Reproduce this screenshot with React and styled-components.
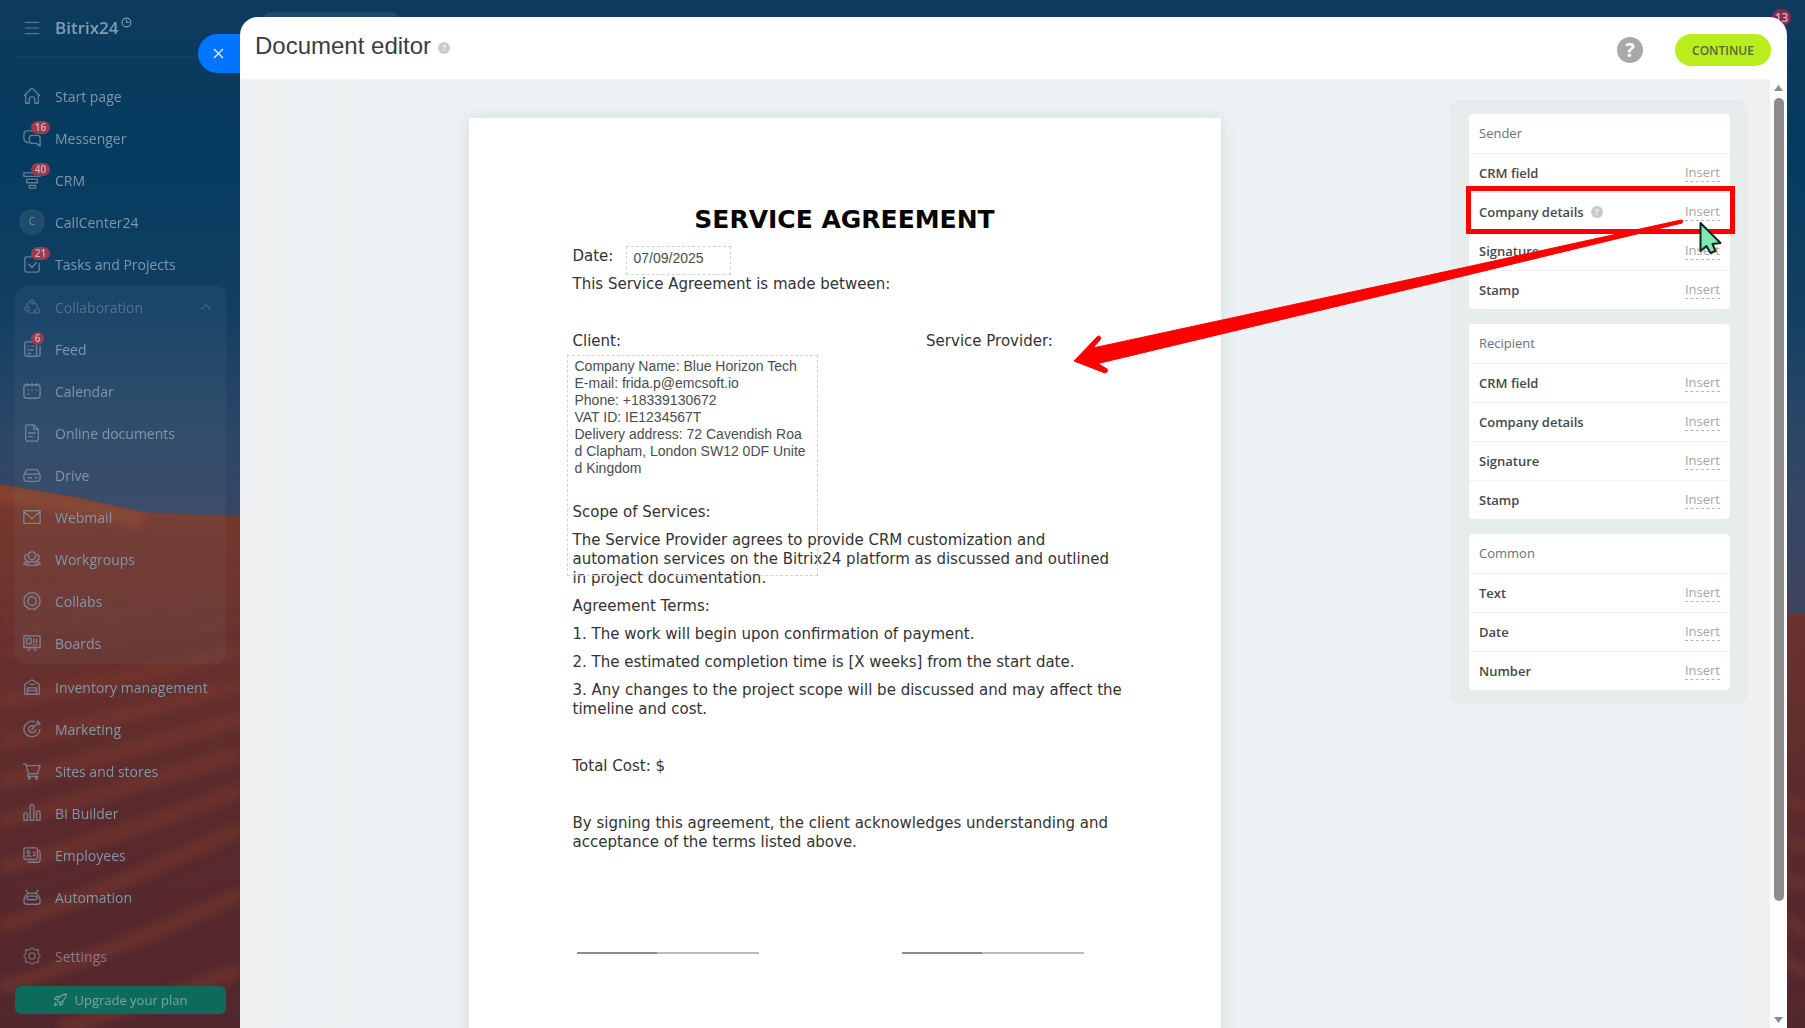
import React from "react";
import styled, { createGlobalStyle } from "styled-components";


const GlobalStyle = createGlobalStyle`
    * { box-sizing: border-box; }
    html, body, #root { height: 100%; }
    body {
        margin: 0;
        overflow: hidden;
        font-family: "Open Sans", "Noto Sans", sans-serif;
    }
    button {
        border: none;
        padding: 0;
        background: none;
        font-family: inherit;
        cursor: pointer;
    }
    h1, h2, p, ul { margin: 0; padding: 0; }
    ul { list-style: none; }
`
const Shell = styled.div`
    position: relative;
    isolation: isolate;
    display: flex;
    height: 100vh;
    overflow: hidden;
    background: #0b3c5f;
`
const Wallpaper = styled.svg`
    position: absolute;
    inset: 0;
    z-index: -1;
    width: 100%;
    height: 100%;
`
const Sidebar = styled.nav`
    flex: none;
    width: 240px;
    display: flex;
    flex-direction: column;
    padding: 0 14px 0 15px;
`
const Brand = styled.div`
    display: flex;
    align-items: center;
    gap: 15px;
    height: 57px;
    margin-bottom: 18px;
    padding-left: 9px;
    border-bottom: 1px solid rgba(255, 255, 255, 0.03);
    color: #839db6;
    font-size: 17px;
    font-weight: 600;
`
const BrandName = styled.span`
    display: flex;
    align-items: flex-start;
    gap: 2px;
    line-height: 22px;
`
const MenuButton = styled.button`
    display: flex;
    color: #587b98;
`
const Group = styled.ul`
    margin: ${({ $boxed }) => ($boxed ? "1px 0 2px" : "0")};
    border-radius: 10px;
    background: ${({ $boxed }) => ($boxed ? "rgba(140, 170, 190, 0.07)" : "none")};
`
const MenuItem = styled.a`
    position: relative;
    display: flex;
    align-items: center;
    gap: 14px;
    height: 42px;
    padding: 0 12px 0 8px;
    color: ${({ $dim }) => ($dim ? "#54728b" : "#8196ac")};
    font-size: 14px;
    font-weight: ${({ $dim }) => ($dim ? 400 : 500)};
    text-decoration: none;
    svg { flex: none; opacity: 0.75; }
    svg:last-child { margin-left: auto; }
`
const Counter = styled.span`
    position: absolute;
    left: 16px;
    top: 4px;
    min-width: ${({ $wide }) => ($wide ? "19px" : "13px")};
    border-radius: 7px;
    background: #9d3a50;
    color: #c4b6c6;
    font-size: 10px;
    font-weight: 600;
    line-height: 13px;
    text-align: center;
`
const Avatar = styled.span`
    width: 26px;
    height: 26px;
    margin: 0 -4px;
    border-radius: 50%;
    background: #214d6d;
    color: #6d8ea9;
    font-size: 10px;
    line-height: 25px;
    text-align: center;
`
const SettingsItem = styled(MenuItem)`
    margin-top: 17px;
    color: #857a8b;
`
const UpgradeButton = styled.button`
    display: flex;
    align-items: center;
    justify-content: center;
    gap: 7px;
    height: 28px;
    margin-top: 9px;
    border-radius: 6px;
    background: #0c6b5b;
    color: #7fa3a2;
    font-size: 13px;
    font-weight: 400;
`
const SearchStub = styled.div`
    position: absolute;
    left: 263px;
    top: 12px;
    z-index: -1;
    width: 136px;
    height: 30px;
    border-radius: 8px;
    background: #214c69;
`
const BellCounter = styled(Counter)`
    left: auto;
    right: 14px;
    top: 9px;
    z-index: -1;
    border-radius: 9px;
    font-size: 12px;
    line-height: 17px;
    background: #8c2a4c;
`
const Slider = styled.main`
    position: relative;
    flex: 1;
    min-width: 0;
    display: flex;
    flex-direction: column;
    margin: 17px 18px 0 0;
    border-radius: 18px 18px 0 0;
    background: #fff;
`
const CloseButton = styled.button`
    position: absolute;
    right: 100%;
    top: 17px;
    display: flex;
    align-items: center;
    justify-content: center;
    width: 42px;
    height: 39px;
    padding-right: 2px;
    border-radius: 20px 0 0 20px;
    background: #0075ff;
    color: #e8f2ff;
`
const Header = styled.header`
    flex: none;
    display: flex;
    align-items: center;
    height: 62px;
    padding: 0 16px 0 15px;
`
const Title = styled.h1`
    margin-bottom: 4px;
    color: #3a3d41;
    font-family: "Liberation Sans", sans-serif;
    font-size: 24px;
    font-weight: 400;
    line-height: 30px;
`
const Hint = styled.span`
    flex: none;
    width: 12px;
    height: 12px;
    margin-left: 7px;
    border-radius: 50%;
    background: #cacaca;
    color: #f4f4f4;
    font-size: 8px;
    font-weight: 700;
    line-height: 12px;
    text-align: center;
`
const HelpButton = styled.button`
    width: 26px;
    height: 26px;
    margin: 4px 32px 0 auto;
    border-radius: 50%;
    background: #aaa8a9;
    color: #fff;
    font-size: 20px;
    font-weight: 700;
    line-height: 26px;
`
const ContinueButton = styled.button`
    width: 96px;
    height: 32px;
    margin-top: 4px;
    border-radius: 16px;
    background: #b9ed1e;
    color: #55683c;
    font-size: 12px;
    font-weight: 600;
`
const Body = styled.div`
    flex: 1;
    min-height: 0;
    display: flex;
`
const Canvas = styled.section`
    flex: 1;
    min-width: 0;
    display: flex;
    justify-content: center;
    align-items: flex-start;
    padding-top: 39px;
    overflow: hidden;
    background: linear-gradient(90deg, #eeeff1, #ecf2f3 12%);
`
const Paper = styled.article`
    position: relative;
    flex: none;
    width: 752px;
    min-height: 1064px;
    padding: 87px 104px;
    background: #fff;
    box-shadow: 0 0 14px rgba(60, 70, 80, 0.12);
    color: #333;
    font-family: "DejaVu Sans", sans-serif;
    font-size: 15px;
    line-height: 19px;
    p { margin: 0 -10px 9px 0; }
`
const PaperTitle = styled.h2`
    margin-bottom: 12px;
    color: #050505;
    font-size: 25px;
    line-height: 30px;
    text-align: center;
`
const Blank = styled.div`
    height: ${({ $big }) => ($big ? "143px" : "29px")};
`
const Parties = styled.div`
    display: flex;
    p { flex: 0 0 65%; margin-right: 0; }
`
const Field = styled.div`
    position: absolute;
    border: 1px dashed #d0d3d6;
    color: #4a4d52;
    font-family: "Liberation Sans", sans-serif;
    font-size: 14px;
    line-height: 17px;
`
const DateField = styled(Field)`
    left: 157px;
    top: 128px;
    width: 105px;
    height: 29px;
    padding: 3px 7px;
`
const CompanyField = styled(Field)`
    left: 98px;
    top: 237px;
    width: 251px;
    height: 221px;
    padding: 2px 9px 2px 7px;
    word-break: break-all;
`
const Signatures = styled.div`
    display: flex;
    gap: 143px;
    padding: 91px 4px 0;
`
const SignLine = styled.span`
    width: 182px;
    height: 2px;
    background: linear-gradient(90deg, #8c8c8c 44%, #bdbdbd 44%);
`
const Tools = styled.aside`
    flex: none;
    padding: 21px 22px 0 0;
    background: linear-gradient(90deg, #ecf2f3 88%, #f0f0f2 94%);
`
const Palette = styled.div`
    display: flex;
    flex-direction: column;
    gap: 15px;
    padding: 14px 18px 14px 20px;
    border-radius: 10px;
    background: #e7ecec;
`
const Card = styled.section`
    width: 261px;
    border-radius: 4px;
    background: #fff;
`
const CardTitle = styled.h2`
    height: 39px;
    padding: 0 10px;
    color: #6b7177;
    font-size: 13px;
    font-weight: 500;
    line-height: 39px;
`
const BlockRow = styled.div`
    display: flex;
    align-items: center;
    height: 39px;
    padding: 0 10px;
    border-top: 1px solid #eef0f2;
    color: #45494e;
    font-size: 13px;
    font-weight: 600;
`
const InsertButton = styled.button`
    margin-left: auto;
    border-bottom: 1px dashed #b5b7ba;
    color: #a4a6aa;
    font-size: 13px;
    line-height: 17px;
`
const Scrollbar = styled.div`
    flex: none;
    display: flex;
    flex-direction: column;
    align-items: center;
    width: 17px;
    padding: 6px 0 5px;
    background: #fdfdfd;
`
const Thumb = styled.div`
    flex: 0 1 803px;
    width: 10px;
    margin: 7px 0 auto;
    border-radius: 5px;
    background: #8c8c8c;
`
const Callout = styled.svg`
    position: absolute;
    right: 0;
    top: 0;
    z-index: 2;
    pointer-events: none;
`

const icons = {
    menu: <path d="M1 3h18M1 10h18M1 17h18" />,
    home: <path d="M1 10 10 1l9 9M3 8v10h4v-5q0-2 3-2t3 2v5h4V8" />,
    chat: <path d="M6 15H5Q1 14 1 10V6q0-4 4-4h9q2 0 2 3M10 7h6q3 0 3 3v9l-4-3h-5q-3 0-3-3v-3q0-3 3-3" />,
    funnel: <path d="M1 2h18v4H1zM4 9h12v4H4zM7 16h7v3H7z" />,
    task: <path d="M12 2H4Q2 2 2 4v13q0 2 2 2h12q2 0 2-2V9M6 10l4 4 5-6" />,
    collab: <path d="M8 4Q4 5 4 10m1 4q4 5 9 2m2-4q1-5-4-7M8 4q0-2 2-2t2 3-2 1-2-2M4 10q-2 0-2 2t3 2 1-3-2-1M16 12q3 0 2 3t-4 1 0-3 2-1" />,
    feed: <path d="M15 18H4q-2 0-2-2V4q0-2 2-2h9q2 0 2 2v12q0 2 2 2t2-2V7M5 7h2m2 0h3m-7 4h7m-7 4h4" />,
    calendar: <path d="M4 3h12q3 0 3 3v9q0 3-3 3H4q-3 0-3-3V6q0-3 3-3M5 1v4m5-4v4m5-4v4M5 9h2m2 0h2m3 0h2M5 13h2" />,
    doc: <path d="M5 1h7l5 5v10q0 3-3 3H6q-3 0-3-3V4q0-3 2-3M12 1v5h5M6 10h8m-8 4h5" />,
    drive: <path d="M1 10 3 6q1-2 3-2h8q2 0 3 2l2 4v4q0 3-3 3H4q-3 0-3-3zM2 9h16M5 13h5m3 0h3" />,
    mail: <path d="M1 3h18v14H1zM1 4l9 8 9-8" />,
    people: <path d="M10 2q4 0 4 4t-4 5q-4-1-4-5t4-4M4 17q0-4 6-4t6 4zM5 5Q2 5 2 8t3 4q-4 1-4 4h3M15 5q3 0 3 3t-3 4q4 1 4 4h-3" />,
    hex: <><path d="M7 1h6l5 4 1 5-1 5-5 4H7l-5-4-1-5 1-5z" /><path d="m10 5 4 2 1 4-2 3-3 1-4-2-1-3 2-4z" /></>,
    board: <path d="M1 2h18v13H1zM4 5h5v6H4zM12 5v5m3-5v5m-4 2h5M8 15l-2 4m6-4 2 4" />,
    stock: <path d="M2 18V7l8-5 8 5v11zM5 18v-7h10v7M5 14h10M7 7h6" />,
    target: <path d="M13 2q-4-2-8 1-6 5-3 11 4 6 11 4 5-2 6-8M13 7Q8 5 6 9q0 5 4 5t4-4M9 11l7-7V1l3 3-2 2" />,
    cart: <><path d="M0 2h3l3 11h10l3-9H4M6 13l-1 3h12" /><circle cx="7" cy="18" r="1" /><circle cx="15" cy="18" r="1" /></>,
    bars: <path d="M1 11q2-3 4 0v7H1zM8 2q2-3 4 0v16H8zM15 9q2-3 4 0v9h-4z" />,
    badge: <><path d="M3 2h11q2 0 2 2v9q0 2-2 2H3q-2 0-2-2V4q0-2 2-2M17 5q2 0 2 2v8q0 3-3 3H5" /><circle cx="6" cy="7" r="1.5" /><path d="M4 12q2-3 5 0M11 7h3m-3 3h3" /></>,
    robot: <><path d="M4 18q-3 0-3-3 0-8 6-9h6q6 1 6 9 0 3-3 3zM6 6 3 2m11 4 3-4" /><path d="M7 9h6q3 0 3 2t-3 2H7q-3 0-3-2t3-2M8 11h0m4 0h0" /></>,
    gear: <><path d="m10 1 3 2 4 0 0 4 2 3-2 3 0 4-4 0-3 2-3-2-4 0 0-4-2-3 2-3 0-4 4 0z" /><circle cx="10" cy="10" r="3.5" /></>,
    rocket: <path d="M8 13 6 11q3-8 13-10-1 10-10 13zM6 9H2l3-4h4M10 14v4l4-3v-4M4 13l-2 5 5-2" />,
    up: <path d="m4 13 6-6 6 6" />,
    close: <path d="m3 3 14 14M17 3 3 17" />,
    clock: <><circle cx="10" cy="10" r="8" /><path d="M10 5v5h5" /></>
}

const Icon = ({ name, size = 18, stroke = 1.5 }) => (
    <svg width={size} height={size} viewBox="0 0 20 20" fill="none" stroke="currentColor" strokeWidth={stroke} strokeLinejoin="round" aria-hidden="true">
        {icons[name]}
    </svg>
)

const mainItems = [
    { label: "Start page", icon: "home" },
    { label: "Messenger", icon: "chat", count: 16 },
    { label: "CRM", icon: "funnel", count: 40 },
    { label: "CallCenter24", letter: "C" },
    { label: "Tasks and Projects", icon: "task", count: 21 }
]
const collabItems = [
    { label: "Collaboration", icon: "collab", dim: true, open: true },
    { label: "Feed", icon: "feed", count: 6 },
    { label: "Calendar", icon: "calendar" },
    { label: "Online documents", icon: "doc" },
    { label: "Drive", icon: "drive" },
    { label: "Webmail", icon: "mail" },
    { label: "Workgroups", icon: "people" },
    { label: "Collabs", icon: "hex" },
    { label: "Boards", icon: "board" }
]
const otherItems = [
    { label: "Inventory management", icon: "stock" },
    { label: "Marketing", icon: "target" },
    { label: "Sites and stores", icon: "cart" },
    { label: "BI Builder", icon: "bars" },
    { label: "Employees", icon: "badge" },
    { label: "Automation", icon: "robot" }
]
const blocks = [
    { title: "Sender", rows: ["CRM field", "Company details", "Signature", "Stamp"] },
    { title: "Recipient", rows: ["CRM field", "Company details", "Signature", "Stamp"] },
    { title: "Common", rows: ["Text", "Date", "Number"] }
]

const MenuGroup = ({ items, boxed }) => (
    <Group $boxed={boxed}>
        {items.map((item) => (
            <li key={item.label}>
                <MenuItem href="#" $dim={item.dim}>
                    {item.letter ? <Avatar>{item.letter}</Avatar> : <Icon name={item.icon} />}
                    {item.count && <Counter $wide={item.count > 9}>{item.count}</Counter>}
                    <span>{item.label}</span>
                    {item.open && <Icon name="up" size={16} />}
                </MenuItem>
            </li>
        ))}
    </Group>
)

// desert dunes under a dark blue sky
const Desert = () => (
    <Wallpaper viewBox="0 0 1805 1028" preserveAspectRatio="none" aria-hidden="true">
        <defs>
            <linearGradient id="sky" x1="0" y1="0" x2="0" y2="1">
                <stop offset="0" stopColor="#0d3b5d" />
                <stop offset="0.15" stopColor="#053b60" />
                <stop offset="0.3" stopColor="#123f63" />
                <stop offset="0.42" stopColor="#2c4767" />
                <stop offset="0.6" stopColor="#41435f" />
            </linearGradient>
            <linearGradient id="sand" x1="0" y1="0" x2="0" y2="1">
                <stop offset="0" stopColor="#79392c" />
                <stop offset="0.25" stopColor="#6b332f" />
                <stop offset="0.6" stopColor="#5b2a2d" />
                <stop offset="1" stopColor="#52272e" />
            </linearGradient>
            <filter id="soft" x="-5%" y="-5%" width="110%" height="110%">
                <feGaussianBlur stdDeviation="5" />
            </filter>
            <clipPath id="dunes">
                <path d="M0 484 80 498 143 512 240 516 1780 613H1805V1028H0z" />
            </clipPath>
        </defs>
        <rect width="1805" height="1028" fill="url(#sky)" />
        <path d="M0 484 80 498 143 512 240 516 1780 613H1805V1028H0z" fill="url(#sand)" />
        <g clipPath="url(#dunes)">
            <g filter="url(#soft)" fill="none" stroke="#78372f">
                <path d="M-20 490 80 506 143 520" stroke="#87432d" strokeWidth="16" />
                <g strokeWidth="6" opacity="0.4">
                    <path d="M0 590Q120 584 240 572M0 610Q120 602 240 588M0 632Q120 620 240 606M0 654Q120 640 240 624" />
                </g>
                <g strokeWidth="14" opacity="0.6">
                    <path d="M0 702Q120 680 240 650M0 742Q120 718 240 684M0 782Q120 754 240 718M0 822Q120 790 240 754M0 868Q120 836 240 790M0 927Q120 886 240 828M0 988Q120 950 240 894M60 1028Q150 1004 240 970" />
                </g>
                <g strokeWidth="9" opacity="0.6">
                    <path d="M1785 800 1806 810M1785 838 1806 850M1785 875 1806 890M1785 918 1806 934M1785 958 1806 976" />
                </g>
            </g>
        </g>
    </Wallpaper>
)


export default class App extends React.Component {

    render() {

        return (
            <Shell>
                <GlobalStyle />
                <Desert />
                <SearchStub />
                <BellCounter $wide>13</BellCounter>

                <Sidebar>
                    <Brand>
                        <MenuButton aria-label="Menu"><Icon name="menu" size={16} /></MenuButton>
                        <BrandName>Bitrix24<Icon name="clock" size={11} stroke={2} /></BrandName>
                    </Brand>
                    <MenuGroup items={mainItems} />
                    <MenuGroup items={collabItems} boxed />
                    <MenuGroup items={otherItems} />
                    <SettingsItem href="#"><Icon name="gear" /><span>Settings</span></SettingsItem>
                    <UpgradeButton><Icon name="rocket" size={14} />Upgrade your plan</UpgradeButton>
                </Sidebar>

                <Slider>
                    <CloseButton aria-label="Close"><Icon name="close" size={13} stroke={2} /></CloseButton>
                    <Header>
                        <Title>Document editor</Title>
                        <Hint>?</Hint>
                        <HelpButton>?</HelpButton>
                        <ContinueButton>CONTINUE</ContinueButton>
                    </Header>

                    <Body>
                        <Canvas>
                            <Paper>
                                <PaperTitle>SERVICE AGREEMENT</PaperTitle>
                                <p>Date:</p>
                                <p>This Service Agreement is made between:</p>
                                <Blank />
                                <Parties>
                                    <p>Client:</p>
                                    <p>Service Provider:</p>
                                </Parties>
                                <Blank $big />
                                <p>Scope of Services:</p>
                                <p>The Service Provider agrees to provide CRM customization and automation services on the Bitrix24 platform as discussed and outlined in project documentation.</p>
                                <p>Agreement Terms:</p>
                                <p>1. The work will begin upon confirmation of payment.</p>
                                <p>2. The estimated completion time is [X weeks] from the start date.</p>
                                <p>3. Any changes to the project scope will be discussed and may affect the timeline and cost.</p>
                                <Blank />
                                <p>Total Cost: $</p>
                                <Blank />
                                <p>By signing this agreement, the client acknowledges understanding and acceptance of the terms listed above.</p>
                                <Signatures>
                                    <SignLine />
                                    <SignLine />
                                </Signatures>
                                <DateField>07/09/2025</DateField>
                                <CompanyField>
                                    <div>Company Name: Blue Horizon Tech</div>
                                    <div>E-mail: frida.p@emcsoft.io</div>
                                    <div>Phone: +18339130672</div>
                                    <div>VAT ID: IE1234567T</div>
                                    <div>Delivery address: 72 Cavendish Road Clapham, London SW12 0DF United Kingdom</div>
                                </CompanyField>
                            </Paper>
                        </Canvas>

                        <Tools>
                            <Palette>
                                {blocks.map((block) => (
                                    <Card key={block.title}>
                                        <CardTitle>{block.title}</CardTitle>
                                        {block.rows.map((row) => (
                                            <BlockRow key={row}>
                                                {row}
                                                {block.title === "Sender" && row === "Company details" && <Hint>?</Hint>}
                                                <InsertButton aria-label={"Insert " + row}>Insert</InsertButton>
                                            </BlockRow>
                                        ))}
                                    </Card>
                                ))}
                            </Palette>
                        </Tools>

                        <Scrollbar>
                            <svg width="9" height="6" viewBox="0 0 9 6"><path d="M0 6 4.500 0 9 6z" fill="#8c8c8c" /></svg>
                            <Thumb />
                            <svg width="9" height="6" viewBox="0 0 9 6"><path d="M0 0h9L4.500 6z" fill="#8c8c8c" /></svg>
                        </Scrollbar>
                    </Body>
                </Slider>

                <Callout width="735" height="380" viewBox="1070 0 735 380" aria-hidden="true">
                    <rect x="1468.500" y="188.500" width="264" height="43" fill="none" stroke="#f00" strokeWidth="5" />
                    <path d="M1700.500 223v28l6-5 4 7 5-2-3-7 8-1z" fill="#7fe9b4" stroke="#10251c" strokeWidth="2" strokeLinejoin="round" />
                    <path
                        d="M1681 220 1430 275 1093 348 1100 340Q1102 336 1098 336L1074 361 1105 373Q1109 372 1107 369L1098 363.500 1430 284 1682 223Q1684 220 1681 220z"
                        fill="#f00" stroke="#f00" strokeWidth="1" strokeLinejoin="round"
                    />
                </Callout>
            </Shell>
        )
    };

};
